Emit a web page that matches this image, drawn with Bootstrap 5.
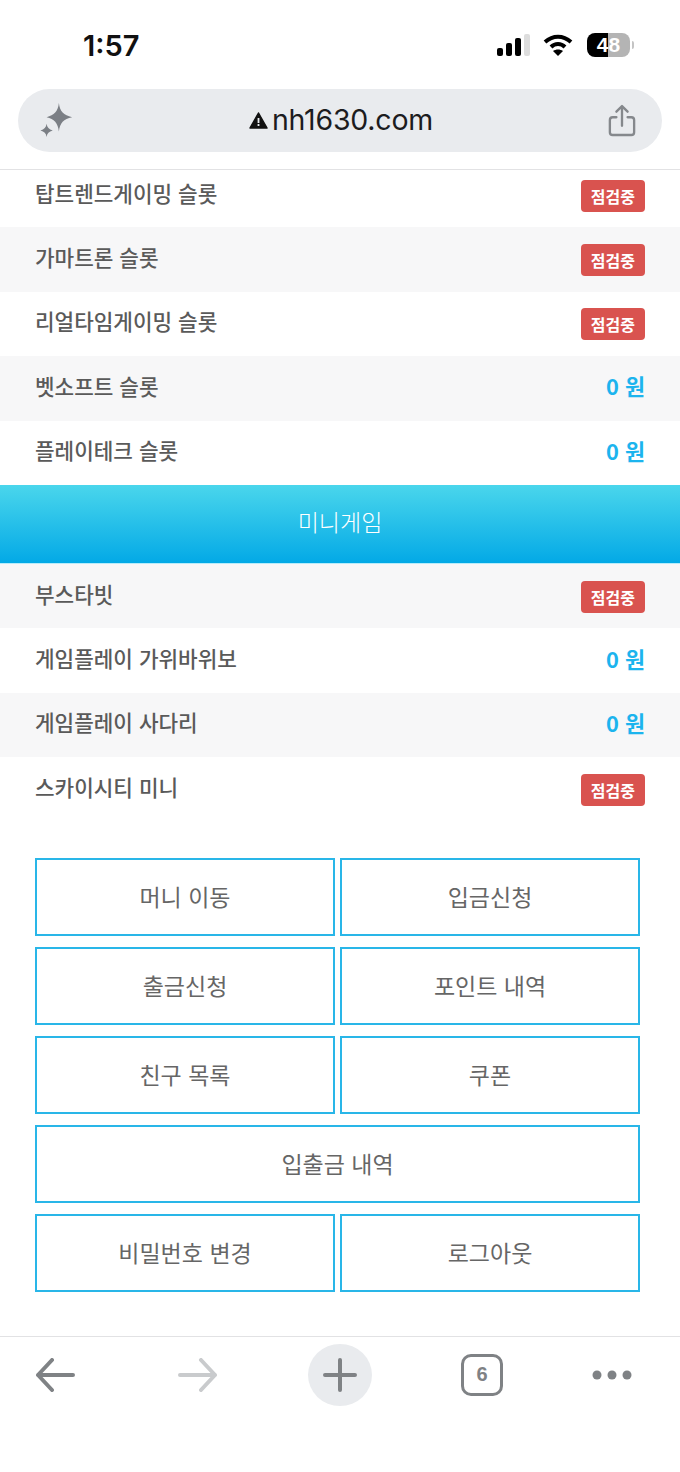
<!DOCTYPE html>
<html lang="ko">
<head>
<meta charset="utf-8">
<title>nh1630.com</title>
<link href="https://cdn.jsdelivr.net/npm/bootstrap@5.3.0/dist/css/bootstrap.min.css" rel="stylesheet">
<style>
html,body{height:1472px;overflow:hidden;background:#fff}
body{font-family:"Liberation Sans","Noto Sans CJK KR",sans-serif;color:#555}
.status-strip{height:89px;padding:30px 46px 0 83px}
.clock{font-family:"Inter","Liberation Sans",sans-serif;font-size:29px;font-weight:600;color:#111;line-height:32px}
.status-icons{margin-top:3px}
.signal-ico{margin-right:6px}
.batt{width:43px;height:24px;border-radius:8px;background:linear-gradient(90deg,#000 0 49%,#b4b4b4 49%);color:#fff;font:700 21px/24px "Liberation Sans",sans-serif;margin-left:13px}
.batt-nub{width:2px;height:8px;background:#c4c4c4;border-radius:0 2px 2px 0;margin-left:2px}
.url-wrap{height:81px;padding:0 18px;border-bottom:1px solid #e2e2e4}
.url-pill{height:63px;border-radius:32px;background:#e9ebee;padding:0 26px 0 22px}
.url-text{font-family:"Inter","Liberation Sans",sans-serif;font-size:28.5px;letter-spacing:-.2px;color:#1c1c1e;line-height:32px;margin-top:-2px}
.scroll-area{height:650px;overflow:hidden}
.game-list{margin-top:-7px}
.game-row{height:64.4px;padding:0 35px}
.game-row:nth-child(even){background:#f7f7f8}
.game-name{font-family:"Noto Sans CJK KR",sans-serif;font-size:21.3px;font-weight:500;color:#5a5a5a;line-height:30px;margin-top:-5px}
.chip{background:#d9534f;color:#fff;font-family:"Noto Sans CJK KR",sans-serif;font-size:16px;font-weight:700;line-height:20px;padding:6px 10px;border-radius:4px;margin-top:1px;white-space:nowrap}
.amount{font-family:"Noto Sans CJK KR",sans-serif;font-size:21.8px;font-weight:700;color:#1cb4ee;line-height:30px;margin-top:-4px}
.section-head{height:79px;background:linear-gradient(#4ad6ec,#03a9e6);border-bottom:1px solid #b8ecfa;color:#fff;font-family:"Noto Sans CJK KR",sans-serif;font-weight:300;font-size:23px;padding-bottom:6px}
.sub-list .game-row:nth-child(odd){background:#f7f7f8}
.sub-list .game-row:nth-child(even){background:#fff}
.action-area{padding:38px 40px 0 35px;display:grid;grid-template-columns:1fr 1fr;gap:11px 5px}
.action-btn{height:78px;border:2px solid #29b6e8;border-radius:0;background:#fff;color:#666;font-family:"Noto Sans CJK KR",sans-serif;font-size:23px;font-weight:400;padding:0 0 2px;display:flex;align-items:center;justify-content:center}
.action-wide{grid-column:1 / 3}
.tool-strip{position:fixed;left:0;right:0;top:1336px;height:136px;border-top:1px solid #e2e2e4;background:#fff;padding:6px 0 0 36px}
.tool-cell{height:63px}
.tc-forward{margin-left:103px}
.tc-plus{margin-left:91px}
.tc-tabs{margin-left:89px}
.tc-more{margin-left:89px}
.plus-disc{width:64px;height:62px;border-radius:50%;background:#e9ebee}
.tab-box{width:42px;height:42px;border:3.5px solid #7f8285;border-radius:10px;color:#7f8285;font:700 20px/35px "Liberation Sans",sans-serif;text-align:center}
</style>
</head>
<body>
<div class="status-strip d-flex justify-content-between align-items-start">
  <span class="clock">1:57</span>
  <div class="status-icons d-flex align-items-center">
    <svg width="36" height="24" viewBox="0 0 36 24" class="signal-ico"><rect x="1" y="15" width="6" height="8" rx="2" fill="#000"/><rect x="10" y="10" width="6" height="13" rx="2" fill="#000"/><rect x="19" y="5" width="6" height="18" rx="2" fill="#000"/><rect x="28" y="1" width="6" height="22" rx="2" fill="#ddd"/></svg>
    <svg width="32" height="24" viewBox="0 0 32 24" fill="none" stroke="#000" stroke-width="4" class="ms-1"><path d="M3 9c8-7 18-7 26 0"/><path d="M9 14c4-4 10-4 14 0"/><path d="M16 23l-5-5c3-2 7-2 10 0z" fill="#000" stroke="none"/></svg>
    <div class="batt d-flex justify-content-center">48</div>
    <div class="batt-nub"></div>
  </div>
</div>
<div class="url-wrap">
  <div class="url-pill d-flex align-items-center justify-content-between">
    <svg width="34" height="36" viewBox="0 0 36 38" fill="#7b7f85"><path d="M20 0c1 9 5 13 14 15-9 2-13 6-14 15-1-9-5-13-13-15 8-2 12-6 13-15z"/><path d="M7 22c.5 4 2.500 6 6.500 7-4 1-6 3-6.500 7-.5-4-2.500-6-6.500-7 4-1 6-3 6.500-7z"/></svg>
    <div class="d-flex align-items-center gap-1">
      <svg width="19" height="17" viewBox="0 0 19 17"><path d="M9.500 1L18 16H1z" fill="#111" stroke="#111" stroke-width="1.500" stroke-linejoin="round"/><rect x="8.600" y="6" width="1.800" height="5" fill="#e9ebee"/><rect x="8.600" y="12" width="1.800" height="2" fill="#e9ebee"/></svg>
      <span class="url-text">nh1630.com</span>
    </div>
    <svg width="28" height="34" viewBox="0 0 30 34" fill="none" stroke="#85888c" stroke-width="2.500" stroke-linecap="round" stroke-linejoin="round"><path d="M9 13H5a3 3 0 0 0-3 3v13a3 3 0 0 0 3 3h20a3 3 0 0 0 3-3V16a3 3 0 0 0-3-3h-4"/><path d="M15 22V2M9 7l6-6 6 6"/></svg>
  </div>
</div>
<div class="scroll-area">
  <div class="game-list">
    <div class="game-row d-flex justify-content-between align-items-center"><span class="game-name">탑트렌드게이밍 슬롯</span><span class="chip">점검중</span></div>
    <div class="game-row d-flex justify-content-between align-items-center"><span class="game-name">가마트론 슬롯</span><span class="chip">점검중</span></div>
    <div class="game-row d-flex justify-content-between align-items-center"><span class="game-name">리얼타임게이밍 슬롯</span><span class="chip">점검중</span></div>
    <div class="game-row d-flex justify-content-between align-items-center"><span class="game-name">벳소프트 슬롯</span><span class="amount">0 원</span></div>
    <div class="game-row d-flex justify-content-between align-items-center"><span class="game-name">플레이테크 슬롯</span><span class="amount">0 원</span></div>
  </div>
  <div class="section-head d-flex align-items-center justify-content-center">미니게임</div>
  <div class="sub-list">
    <div class="game-row d-flex justify-content-between align-items-center"><span class="game-name">부스타빗</span><span class="chip">점검중</span></div>
    <div class="game-row d-flex justify-content-between align-items-center"><span class="game-name">게임플레이 가위바위보</span><span class="amount">0 원</span></div>
    <div class="game-row d-flex justify-content-between align-items-center"><span class="game-name">게임플레이 사다리</span><span class="amount">0 원</span></div>
    <div class="game-row d-flex justify-content-between align-items-center"><span class="game-name">스카이시티 미니</span><span class="chip">점검중</span></div>
  </div>
</div>
<div class="action-area">
  <button class="btn action-btn">머니 이동</button>
  <button class="btn action-btn">입금신청</button>
  <button class="btn action-btn">출금신청</button>
  <button class="btn action-btn">포인트 내역</button>
  <button class="btn action-btn">친구 목록</button>
  <button class="btn action-btn">쿠폰</button>
  <button class="btn action-btn action-wide">입출금 내역</button>
  <button class="btn action-btn">비밀번호 변경</button>
  <button class="btn action-btn">로그아웃</button>
</div>
<div class="tool-strip d-flex">
  <div class="tool-cell d-flex align-items-center"><svg width="39" height="34" viewBox="0 0 39 34" fill="none" stroke="#7f8285" stroke-width="4" stroke-linecap="round" stroke-linejoin="round"><path d="M2 17h35M16 2L2 17l14 15"/></svg></div>
  <div class="tool-cell tc-forward d-flex align-items-center"><svg width="39" height="34" viewBox="0 0 39 34" fill="none" stroke="#c9cbcd" stroke-width="4" stroke-linecap="round" stroke-linejoin="round"><path d="M2 17h35M23 2l14 15-14 15"/></svg></div>
  <div class="tool-cell tc-plus d-flex align-items-center"><div class="plus-disc d-flex align-items-center justify-content-center"><svg width="34" height="34" viewBox="0 0 34 34" stroke="#7f8285" stroke-width="4" stroke-linecap="round"><path d="M2 17h30M17 2v30"/></svg></div></div>
  <div class="tool-cell tc-tabs d-flex align-items-center"><div class="tab-box">6</div></div>
  <div class="tool-cell tc-more d-flex align-items-center"><svg width="40" height="10" viewBox="0 0 40 10" fill="#7f8285"><circle cx="5" cy="5" r="4.500"/><circle cx="20" cy="5" r="4.500"/><circle cx="35" cy="5" r="4.500"/></svg></div>
</div>
<script src="https://cdn.jsdelivr.net/npm/bootstrap@5.3.0/dist/js/bootstrap.bundle.min.js"></script>
</body>
</html>
